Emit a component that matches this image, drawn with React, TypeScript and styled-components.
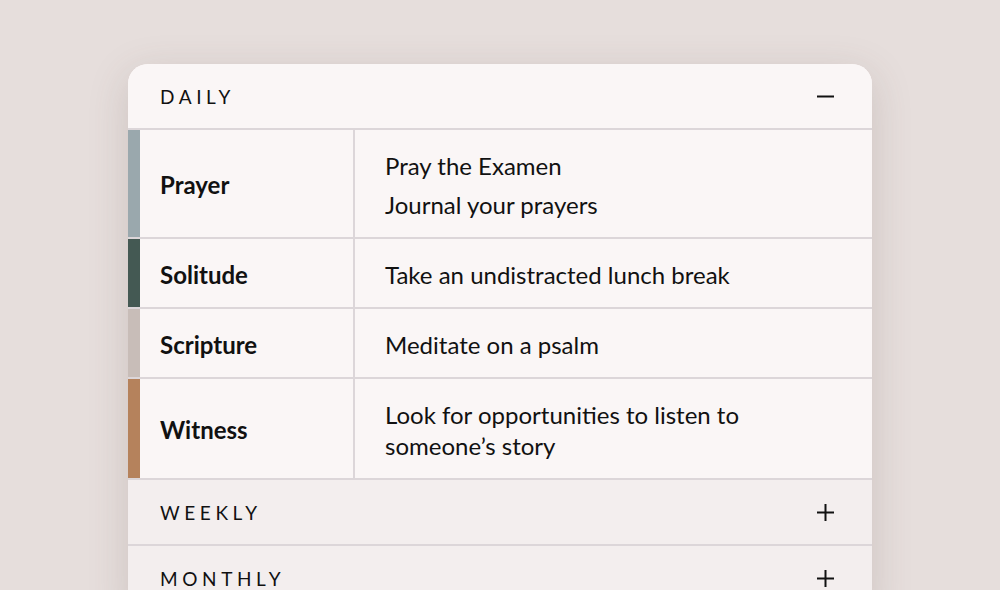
import styled, { createGlobalStyle } from "styled-components"

const GlobalStyle = createGlobalStyle`
  html, body {
    margin: 0;
    padding: 0;
    background: #e6dedc;
    font-family: Lato, "Open Sans", sans-serif;
    color: #111;
  }
`

type Practice = {
  name: string
  color: string
  items: string[]
}

const daily: Practice[] = [
  { name: "Prayer", color: "#9aa8ad", items: ["Pray the Examen", "Journal your prayers"] },
  { name: "Solitude", color: "#445953", items: ["Take an undistracted lunch break"] },
  { name: "Scripture", color: "#c8bdb8", items: ["Meditate on a psalm"] },
  { name: "Witness", color: "#b5825c", items: ["Look for opportunities to listen to someone\u2019s story"] },
]

const Minus = () => (
  <svg width="17" height="17" viewBox="0 0 17 17">
    <path d="M0 8.5h17" stroke="#111" strokeWidth="2" />
  </svg>
)

const Plus = () => (
  <svg width="17" height="17" viewBox="0 0 17 17">
    <path d="M0 8.5h17M8.5 0v17" stroke="#111" strokeWidth="2" />
  </svg>
)

const App = () => {
  return (
    <>
      <GlobalStyle />
      <Page>
        <Card>
          <Section>
            <Header $open>
              <Title>DAILY</Title>
              <Minus />
            </Header>
            {daily.map((p) => (
              <Row key={p.name}>
                <Bar $color={p.color} />
                <Label>{p.name}</Label>
                <Items>
                  {p.items.map((t) => (
                    <Item key={t}>{t}</Item>
                  ))}
                </Items>
              </Row>
            ))}
          </Section>
          <Section $closed>
            <Header>
              <Title>WEEKLY</Title>
              <Plus />
            </Header>
          </Section>
          <Section $closed>
            <Header>
              <Title>MONTHLY</Title>
              <Plus />
            </Header>
          </Section>
        </Card>
      </Page>
    </>
  )
}
export default App

const Page = styled.div`
  width: 1000px;
  height: 590px;
  overflow: hidden;
  display: flex;
  justify-content: center;
  padding-top: 64px;
  box-sizing: border-box;
`

const Card = styled.div`
  width: 744px;
  align-self: flex-start;
  background: #faf6f6;
  border-radius: 20px 20px 0 0;
  overflow: hidden;
  box-shadow: 0 10px 40px rgba(90, 70, 65, 0.18);
`

const Section = styled.div<{ $closed?: boolean }>`
  background: ${(p) => (p.$closed ? "#f3eeee" : "#faf6f6")};
  border-bottom: 2px solid #dcd6d9;
`

const Header = styled.div<{ $open?: boolean }>`
  height: 64px;
  display: flex;
  align-items: center;
  justify-content: space-between;
  padding: 0 38px 0 32px;
  border-bottom: ${(p) => (p.$open ? "2px solid #dcd6d9" : "none")};
`

const Title = styled.div`
  font-size: 19px;
  letter-spacing: 4.6px;
  font-weight: 400;
`

const Row = styled.div`
  display: grid;
  grid-template-columns: 12px 215px 1fr;
  border-bottom: 2px solid #dcd6d9;
  &:last-child {
    border-bottom: none;
  }
`

const Bar = styled.div<{ $color: string }>`
  background: ${(p) => p.$color};
`

const Label = styled.div`
  display: flex;
  align-items: center;
  padding: 2px 0 0 20px;
  font-size: 24px;
  font-weight: 700;
  border-right: 2px solid #dcd6d9;
`

const Items = styled.div`
  display: flex;
  flex-direction: column;
  justify-content: center;
  gap: 8px;
  padding: 20px 120px 17px 30px;
`

const Item = styled.div`
  font-size: 24px;
  line-height: 31px;
`
